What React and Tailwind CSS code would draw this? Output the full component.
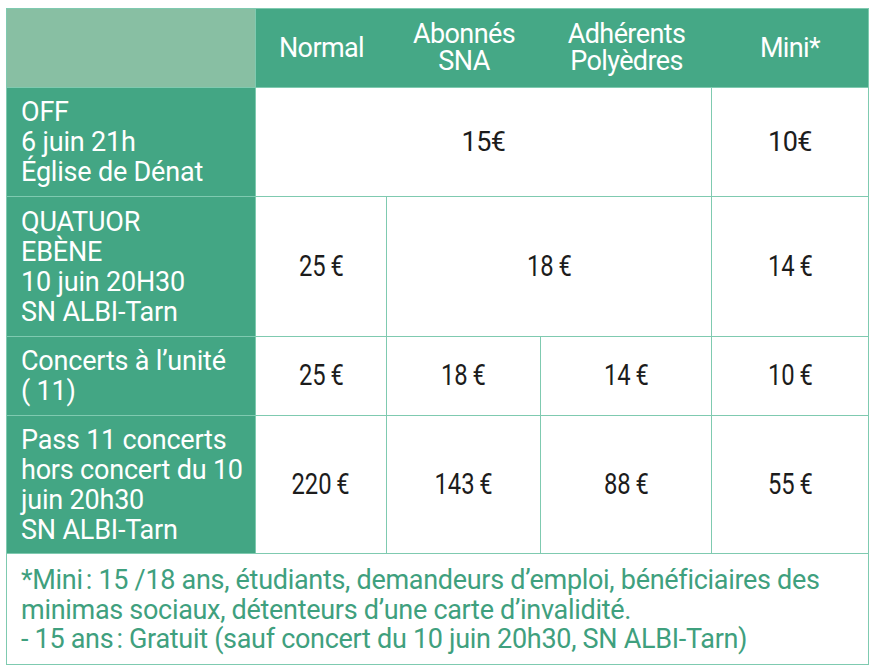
import React from "react";

const label = "font-['Roboto',sans-serif] text-[27px] leading-[30px] text-white tracking-[-0.2px]";

function N({ children }) {
  return (
    <span className="inline-block scale-x-[0.82] font-['Roboto',sans-serif] text-[29px] text-[#1c1c1c] whitespace-nowrap">
      {children}
    </span>
  );
}

function Num({ children, span }) {
  return (
    <div className={`bg-white flex items-center justify-center ${span || ""}`}>
      <N>{children}</N>
    </div>
  );
}

function Label({ children }) {
  return (
    <div className={`bg-[#43a684] flex items-center pl-[14px] ${label}`}>
      <div>{children}</div>
    </div>
  );
}

export default function App() {
  return (
    <div className="w-[876px] h-[672px] bg-white pt-[8px] pl-[6px]">
      <div className="grid w-[863px] grid-cols-[248px_130px_153px_170px_156px] grid-rows-[78px_108px_139px_78px_137px_110px] gap-px bg-[#7fcab0] p-px">
        {/* header */}
        <div className="bg-[#88bfa3]" />
        <div className="col-span-4 bg-[#45a886] grid grid-cols-[131px_154px_171px_156px]">
          {["Normal", "Abonnés\nSNA", "Adhérents\nPolyèdres", "Mini*"].map((t) => (
            <div
              key={t}
              className="flex items-center justify-center text-center whitespace-pre-line font-['Roboto',sans-serif] text-[27px] leading-[27px] text-white tracking-[-0.6px]"
            >
              {t}
            </div>
          ))}
        </div>

        {/* row 1 */}
        <Label>
          OFF
          <br />6 juin 21h
          <br />Église de Dénat
        </Label>
        <div className="col-span-3 bg-white flex items-center justify-center font-['Roboto',sans-serif] text-[27px] text-[#1c1c1c] tracking-[-0.5px]">
          15€
        </div>
        <div className="bg-white flex items-center justify-center font-['Roboto',sans-serif] text-[27px] text-[#1c1c1c] tracking-[-0.5px]">
          10€
        </div>

        {/* row 2 */}
        <Label>
          QUATUOR
          <br />EBÈNE
          <br />10 juin 20H30
          <br />SN ALBI-Tarn
        </Label>
        <Num>25&#8201;€</Num>
        <Num span="col-span-2">18&#8201;€</Num>
        <Num>14&#8201;€</Num>

        {/* row 3 */}
        <Label>
          Concerts à l’unité
          <br />( 11)
        </Label>
        <Num>25&#8201;€</Num>
        <Num>18&#8201;€</Num>
        <Num>14&#8201;€</Num>
        <Num>10&#8201;€</Num>

        {/* row 4 */}
        <Label>
          Pass 11 concerts
          <br />hors concert du 10
          <br />juin 20h30
          <br />SN ALBI-Tarn
        </Label>
        <Num>220&#8201;€</Num>
        <Num>143&#8201;€</Num>
        <Num>88&#8201;€</Num>
        <Num>55&#8201;€</Num>

        {/* footer */}
        <div className="col-span-5 bg-white pl-[14px] pt-[12px] font-['Roboto',sans-serif] text-[27px] leading-[29.5px] text-[#3fa07e] tracking-[-0.3px] whitespace-nowrap">
          *Mini&#8239;: 15 /18 ans, étudiants, demandeurs d’emploi, bénéficiaires des
          <br />
          minimas sociaux, détenteurs d’une carte d’invalidité.
          <br />- 15 ans&#8239;: Gratuit (sauf concert du 10 juin 20h30, SN ALBI-Tarn)
        </div>
      </div>
    </div>
  );
}
